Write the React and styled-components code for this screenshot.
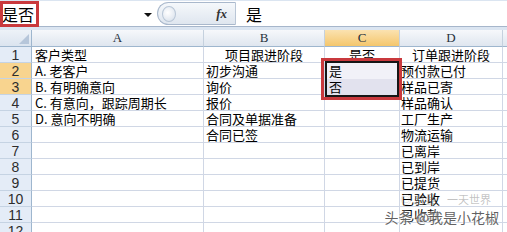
import React from "react";
import styled, { createGlobalStyle, css } from "styled-components";

const Global = createGlobalStyle`
  html, body { margin: 0; padding: 0; background: #ffffff; overflow: hidden; }
  body { width: 507px; height: 232px; font-family: "Noto Sans CJK SC", "Liberation Sans", sans-serif; }
`;

const COLS = [32, 172, 121, 75, 103, 40];
const CJK = `"Noto Sans CJK SC", "Liberation Sans", sans-serif`;

const Page = styled.div`
  position: relative;
  width: 507px;
  height: 232px;
  overflow: hidden;
  background: #dbe5f1;
`;

const Toolbar = styled.div`
  display: flex;
  height: 25px;
  margin-top: 1px;
  border-bottom: 1px solid #a6b6cb;
  background: #ffffff;
`;

const NameBox = styled.div`
  width: 157px;
  display: flex;
  align-items: center;
  justify-content: space-between;
  padding: 0 5px 0 2px;
  box-sizing: border-box;
  font-family: ${CJK};
  font-size: 16px;
  color: #000;
`;

const Arrow = styled.span`
  width: 0;
  height: 0;
  border-left: 4px solid transparent;
  border-right: 4px solid transparent;
  border-top: 4px solid #111;
  margin-top: 2px;
`;

const FxPill = styled.div`
  width: 79px;
  height: 23px;
  margin-top: 1px;
  box-sizing: border-box;
  border: 1px solid #a9b8cc;
  border-right: 1px solid #b9c6d6;
  border-radius: 12px 0 0 12px;
  background: linear-gradient(#f5f8fb, #dfe6ef);
  display: flex;
  align-items: center;
  justify-content: space-between;
  padding: 0 8px 0 4px;
`;

const Knob = styled.span`
  width: 12px;
  height: 14px;
  border-radius: 50%;
  border: 1px solid #b8c6d6;
  background: radial-gradient(circle at 40% 40%, #ffffff, #d4dde9);
`;

const Fx = styled.span`
  font-family: "Liberation Serif", serif;
  font-style: italic;
  font-weight: bold;
  font-size: 13px;
  color: #333;
`;

const FormulaInput = styled.div`
  flex: 1;
  display: flex;
  align-items: center;
  padding-left: 10px;
  font-family: ${CJK};
  font-size: 16px;
  color: #000;
`;

const Sheet = styled.div`
  margin-top: 3px;
  display: grid;
  grid-template-columns: ${COLS.map((c) => c + "px").join(" ")};
  grid-template-rows: 17px;
  grid-auto-rows: 16px;
  background: #ffffff;
`;

const Corner = styled.div`
  position: relative;
  box-sizing: border-box;
  background: linear-gradient(#edf2f8, #dbe4ef);
  border-right: 1px solid #9eb6ce;
  border-bottom: 1px solid #9eb6ce;
  &::after {
    content: "";
    position: absolute;
    right: 2px;
    bottom: 2px;
    width: 0;
    height: 0;
    border-left: 10px solid transparent;
    border-bottom: 10px solid #b6c6da;
  }
`;

const ColHead = styled.div`
  box-sizing: border-box;
  display: flex;
  align-items: center;
  justify-content: center;
  font-family: "Liberation Serif", serif;
  font-size: 13px;
  color: #27313d;
  border-right: 1px solid #c5d1de;
  border-bottom: 1px solid #9eb6ce;
  background: ${(p) =>
    p.$active
      ? "linear-gradient(#fbe2b0, #f4c66c)"
      : "linear-gradient(#f6f8fb, #dfe6ef)"};
`;

const RowHead = styled.div`
  box-sizing: border-box;
  display: flex;
  align-items: center;
  justify-content: center;
  font-family: "Liberation Sans", sans-serif;
  font-size: 14px;
  color: #2d2d2d;
  border-right: 1px solid #9eb6ce;
  border-bottom: 1px solid #c5d3e3;
  background: ${(p) => (p.$active ? "#f8d48f" : "#e4ecf7")};
`;

const Cell = styled.div`
  box-sizing: border-box;
  border-right: 1px solid #d0d7e5;
  border-bottom: 1px solid #d0d7e5;
  font-family: ${CJK};
  font-size: 13px;
  line-height: 15px;
  color: #000;
  white-space: nowrap;
  overflow: visible;
  padding-left: ${(p) => p.$pad ?? 2}px;
  ${(p) =>
    p.$center &&
    css`
      text-align: center;
      padding-left: 0;
    `}
`;

const RedBox = styled.div`
  position: absolute;
  box-sizing: border-box;
  border: 3px solid #c9393d;
  left: ${(p) => p.$x}px;
  top: ${(p) => p.$y}px;
  width: ${(p) => p.$w}px;
  height: ${(p) => p.$h}px;
  pointer-events: none;
`;

const DropList = styled.div`
  position: absolute;
  left: 325px;
  top: 61px;
  width: 74px;
  box-sizing: border-box;
  border: 2px solid #161616;
  border-bottom-width: 3px;
  display: flex;
  flex-direction: column;
  background: #e8e8f2;
`;

const DropItem = styled.div`
  height: 16px;
  line-height: 16px;
  padding-left: 2px;
  font-family: ${CJK};
  font-size: 13px;
  color: #000;
  background: ${(p) => (p.$hover ? "#e2e2ee" : "#f1f1f8")};
`;

const Watermark = styled.div`
  position: absolute;
  right: 8px;
  bottom: 5px;
  display: flex;
  flex-direction: column;
  align-items: flex-end;
  font-family: ${CJK};
  pointer-events: none;
`;

const WmFaint = styled.div`
  font-size: 11px;
  color: rgba(120, 120, 120, 0.45);
  margin-right: 8px;
`;

const WmMain = styled.div`
  font-size: 14px;
  color: rgba(70, 70, 70, 0.85);
  text-shadow: 0 0 2px #fff, 0 0 3px #fff;
`;

const colLetters = ["A", "B", "C", "D", ""];

const rows = [
  ["客户类型", "项目跟进阶段", "是否", "订单跟进阶段"],
  ["A. 老客户", "初步沟通", "", "预付款已付"],
  ["B. 有明确意向", "询价", "", "样品已寄"],
  ["C. 有意向，跟踪周期长", "报价", "", "样品确认"],
  ["D. 意向不明确", "合同及单据准备", "", "工厂生产"],
  ["", "合同已签", "", "物流运输"],
  ["", "", "", "已离岸"],
  ["", "", "", "已到岸"],
  ["", "", "", "已提货"],
  ["", "", "", "已验收"],
  ["", "", "", "已收款"],
  ["", "", "", ""],
];

export default function App() {
  return (
    <>
      <Global />
      <Page>
        <Toolbar>
          <NameBox>
            <span>是否</span>
            <Arrow />
          </NameBox>
          <FxPill>
            <Knob />
            <Fx>fx</Fx>
          </FxPill>
          <FormulaInput>是</FormulaInput>
        </Toolbar>
        <Sheet>
          <Corner />
          {colLetters.map((l, i) => (
            <ColHead key={i} $active={l === "C"}>
              {l}
            </ColHead>
          ))}
          {rows.map((r, ri) => (
            <React.Fragment key={ri}>
              <RowHead $active={ri === 1 || ri === 2}>{ri + 1}</RowHead>
              <Cell $pad={3}>{r[0]}</Cell>
              <Cell $center={ri === 0}>{r[1]}</Cell>
              <Cell $center={ri === 0}>{r[2]}</Cell>
              <Cell $center={ri === 0} $pad={1}>
                {r[3]}
              </Cell>
              <Cell />
            </React.Fragment>
          ))}
        </Sheet>
        <DropList>
          <DropItem>是</DropItem>
          <DropItem $hover>否</DropItem>
        </DropList>
        <RedBox $x={0} $y={1} $w={39} $h={26} />
        <RedBox $x={321} $y={58} $w={81} $h={42} />
        <Watermark>
          <WmFaint>◎ 吉县　一天世界</WmFaint>
          <WmMain>头条 @我是小花椒</WmMain>
        </Watermark>
      </Page>
    </>
  );
}
